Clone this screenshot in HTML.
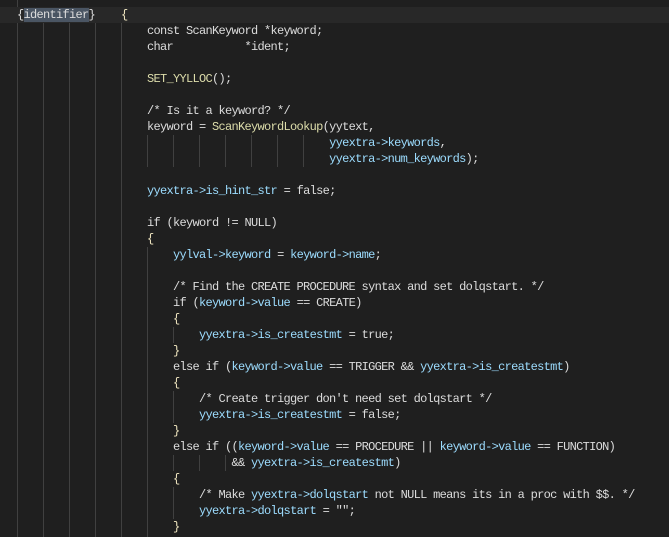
<!DOCTYPE html>
<html><head><meta charset="utf-8"><style>
html,body{margin:0;padding:0;background:#1f1f1f;width:669px;height:537px;overflow:hidden;position:relative}
.cur{position:absolute;left:0;top:7px;width:669px;height:16px;background:#282828}
.g{position:absolute;width:1px;background:#404040}
pre{position:absolute;left:17px;top:7px;margin:0;font-family:"Liberation Mono",monospace;font-size:12px;line-height:16px;color:#dcdcdc;letter-spacing:-0.7px}
.b{color:#9cdcfe}.y{color:#dcdcaa}.k{color:#f0e6c0}
.sel{background:#4a5563}
</style></head><body>
<div class="cur"></div>
<div class="g" style="left:17px;top:0;height:7px"></div>
<div class="g" style="left:17px;top:23px;height:514px"></div>
<div class="g" style="left:43px;top:23px;height:514px"></div>
<div class="g" style="left:69px;top:23px;height:514px"></div>
<div class="g" style="left:95px;top:23px;height:514px"></div>
<div class="g" style="left:121px;top:23px;height:514px"></div>
<div class="g" style="left:147px;top:135px;height:32px"></div>
<div class="g" style="left:147px;top:247px;height:290px"></div>
<div class="g" style="left:173px;top:135px;height:32px"></div>
<div class="g" style="left:199px;top:135px;height:32px"></div>
<div class="g" style="left:225px;top:135px;height:32px"></div>
<div class="g" style="left:251px;top:135px;height:32px"></div>
<div class="g" style="left:277px;top:135px;height:32px"></div>
<div class="g" style="left:303px;top:135px;height:32px"></div>
<div class="g" style="left:173px;top:327px;height:16px"></div>
<div class="g" style="left:173px;top:391px;height:32px"></div>
<div class="g" style="left:173px;top:455px;height:16px"></div>
<div class="g" style="left:199px;top:455px;height:16px"></div>
<div class="g" style="left:225px;top:455px;height:16px"></div>
<div class="g" style="left:173px;top:487px;height:32px"></div>
<pre>{<span class="sel">identifier</span>}    <span class="k">{</span>
                    const ScanKeyword *keyword;
                    char           *ident;

                    <span class="y">SET_YYLLOC</span>();

                    /* Is it a keyword? */
                    keyword = <span class="y">ScanKeywordLookup</span>(yytext,
                                                <span class="b">yyextra-&gt;keywords</span>,
                                                <span class="b">yyextra-&gt;num_keywords</span>);

                    <span class="b">yyextra-&gt;is_hint_str</span> = false;

                    if (keyword != NULL)
                    <span class="k">{</span>
                        <span class="b">yylval-&gt;keyword</span> = <span class="b">keyword-&gt;name</span>;

                        /* Find the CREATE PROCEDURE syntax and set dolqstart. */
                        if (<span class="b">keyword-&gt;value</span> == CREATE)
                        <span class="k">{</span>
                            <span class="b">yyextra-&gt;is_createstmt</span> = true;
                        <span class="k">}</span>
                        else if (<span class="b">keyword-&gt;value</span> == TRIGGER &amp;&amp; <span class="b">yyextra-&gt;is_createstmt</span>)
                        <span class="k">{</span>
                            /* Create trigger don't need set dolqstart */
                            <span class="b">yyextra-&gt;is_createstmt</span> = false;
                        <span class="k">}</span>
                        else if ((<span class="b">keyword-&gt;value</span> == PROCEDURE || <span class="b">keyword-&gt;value</span> == FUNCTION)
                                 &amp;&amp; <span class="b">yyextra-&gt;is_createstmt</span>)
                        <span class="k">{</span>
                            /* Make <span class="b">yyextra-&gt;dolqstart</span> not NULL means its in a proc with $$. */
                            <span class="b">yyextra-&gt;dolqstart</span> = "";
                        <span class="k">}</span></pre>
</body></html>
